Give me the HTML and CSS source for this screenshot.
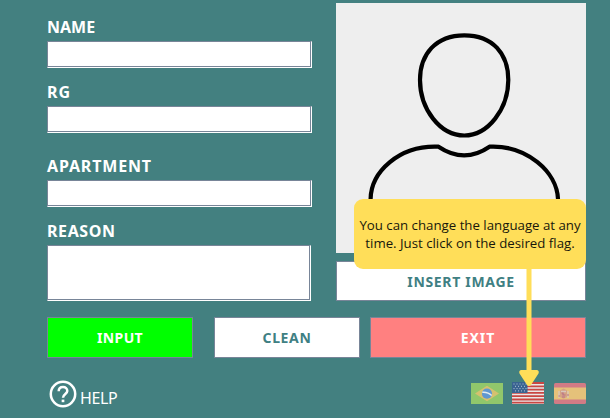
FILE: index.html
```html
<!DOCTYPE html>
<html lang="en">
<head>
<meta charset="utf-8">
<title>Visitor registration</title>
<link rel="stylesheet" href="styles.css">
</head>
<body>
<main class="window">
  <div class="top">
    <form class="fields">
      <label class="field"><span class="name">NAME</span><input class="box" type="text"></label>
      <label class="field"><span class="rg">RG</span><input class="box" type="text"></label>
      <label class="field apartment"><span class="apt">APARTMENT</span><input class="box" type="text"></label>
      <label class="field"><span class="reason">REASON</span><textarea class="box area"></textarea></label>
    </form>
    <section class="photo">
      <svg class="portrait" viewBox="0 0 250 250" fill="none" stroke="#000" stroke-width="4.2" stroke-linejoin="round">
        <path d="M128.300 32.300C157 32.300 172.300 51 172.300 77C172.300 106 152 132.500 128.300 132.500C104 132.500 84 106 84 77C84 51 100 32.300 128.300 32.300Z"/>
        <path d="M34.600 200V196C35 169 63 142 102.500 143.700Q128.300 161 153.500 143.700C191 142 221 169 222 196V200"/>
      </svg>
      <button class="btn insert" type="button">INSERT IMAGE</button>
    </section>
  </div>
  <div class="actions">
    <button class="btn input" type="button">INPUT</button>
    <button class="btn clean" type="button">CLEAN</button>
    <button class="btn exit" type="button">EXIT</button>
  </div>
  <footer class="footer">
    <div class="help">
      <svg class="help-icon" width="28" height="28" viewBox="0 0 28 28" fill="none" stroke="#fff">
        <circle cx="14" cy="14" r="12.200" stroke-width="2.500"/>
        <path d="M9.700 11.300C9.700 8.500 11.500 6.900 14 6.900S18.300 8.600 18.300 11C18.300 13.800 14 14.200 14 17.700" stroke-width="2.500"/>
        <path d="M14 19.600V22.200" stroke-width="2.700"/>
      </svg>
      <span class="help-text">HELP</span>
    </div>
    <div class="flags">
      <svg width="32" height="21" viewBox="0 0 32 21">
        <path fill="#91c76b" d="M0 0H32V21H0Z"/>
        <path fill="#d5c16f" d="M4 10.500L16 2.700L28 10.500L16 18.300Z"/>
        <circle cx="16" cy="10.700" r="5.100" fill="#6097d1"/>
        <path d="M11.300 9.200Q17 8.700 20.700 12.600" fill="none" stroke="#e4edf0" stroke-width="1.500"/>
      </svg>
      <svg width="32" height="22" viewBox="0 0 32 22">
        <path fill="#e9e8e8" d="M0 0H32V22H0Z"/>
        <path d="M0 1H32M0 4.300H32M0 7.600H32M0 10.900H32M0 14.200H32M0 17.500H32M0 20.600H32" stroke="#c94743" stroke-width="1.800"/>
        <path fill="#396391" d="M0 0H15.500V11H0Z"/>
        <path d="M1.500 2H15M3 4.300H15M1.500 6.600H15M3 8.900H15" stroke="#b7c8d5" stroke-width="1" stroke-dasharray="1 2"/>
      </svg>
      <svg width="32" height="21" viewBox="0 0 32 21">
        <rect width="32" height="21" rx="1.500" fill="#d17b85"/>
        <path fill="#e5c17a" d="M0 4.500H32V16.500H0Z"/>
        <path fill="#d5a284" d="M6 7.500L9.500 5.500L13 7.500V14L9.500 15.700L6 14Z"/>
        <path d="M5 8V15M14 8V15M7 8.500H12" stroke="#d8c7bb" stroke-width="1.300"/>
        <path d="M7.500 10H9V12H11.500M8 14H11M4.500 13H6M13 12H15" stroke="#b97388" stroke-width="1.200" fill="none"/>
      </svg>
    </div>
  </footer>
  <aside class="tip">
    <p class="tip-text"><span class="first">You can change the language at any</span><br><span class="second">time. Just click on the desired flag.</span></p>
    <svg class="arrow" width="22" height="118" viewBox="0 0 22 118" fill="#ffde59">
      <path d="M8.500 0H13.500V101H19Q21.500 101.500 20.500 104.500L13 116Q11 118 9 116L1.500 104.500Q.500 101.500 3 101H8.500Z"/>
    </svg>
  </aside>
</main>
</body>
</html>
```
FILE: styles.css
```css
* { box-sizing: border-box; }

body {
  margin: 0;
  background: #438080;
  color: #fff;
  font-family: "Noto Sans", sans-serif;
}

.window {
  position: relative;
  width: 610px;
  height: 418px;
  overflow: hidden;
  padding: 3px 24px 0 47px;
}

.top { display: flex; justify-content: space-between; height: 298px; }

.fields {
  display: flex;
  flex-direction: column;
  gap: 10px;
  width: 265px;
  padding-top: 10px;
}

.field {
  display: block;
  font-size: 16px;
  font-weight: 700;
  line-height: 28px;
}
.field span { display: block; height: 28px; }
.field .rg { letter-spacing: 1px; }
.field .apt { letter-spacing: .85px; }
.field .reason { letter-spacing: .6px; }
.apartment { margin-top: 9px; }

.box {
  display: block;
  width: 265px;
  height: 27px;
  margin: 0;
  border: 1px solid;
  border-color: #788598 #fff #fff #788598;
  border-radius: 0;
  background: #fff;
  box-shadow: inset -1px -1px #788598;
  outline: 0;
  resize: none;
}
.area { width: 264px; height: 56px; }

.photo {
  display: flex;
  flex-direction: column;
  gap: 8px;
  width: 250px;
}
.portrait { display: block; width: 250px; height: 250px; background: #eee; }

.btn {
  padding: 0 0 1px;
  border: 1px solid #788598;
  border-radius: 0;
  background: #fff;
  color: #3f8083;
  font: 700 14px "Noto Sans", sans-serif;
}
.insert { height: 40px; padding: 1px 0 0; letter-spacing: .68px; }

.actions {
  display: grid;
  grid-template-columns: 146px 146px 216px;
  column-gap: 21px;
  height: 41px;
  margin-top: 16px;
}
.input { background: #0f0; color: #fff; letter-spacing: .4px; }
.clean { letter-spacing: .65px; }
.exit { margin-left: -11px; width: 216px; background: #ff8080; color: #fff; letter-spacing: .9px; }

.footer {
  display: flex;
  justify-content: space-between;
  padding-top: 22px;
}
.help { display: flex; gap: 3px; padding-left: 2px; font-size: 16px; line-height: 36px; }
.help-text { letter-spacing: -.35px; }
.flags { display: flex; align-items: flex-end; gap: 9px; height: 24px; }
.flags svg:last-child { margin-left: 1px; }

.tip { position: absolute; left: 354px; top: 199px; width: 232px; }
.tip-text {
  height: 70px;
  margin: 0;
  padding-top: 17px;
  border-radius: 9px;
  background: #ffde59;
  color: #17170b;
  font: 13.250px/18px "Open Sans", sans-serif;
  text-align: center;
  white-space: nowrap;
}
.arrow { position: absolute; left: 164px; top: 70px; }
```
